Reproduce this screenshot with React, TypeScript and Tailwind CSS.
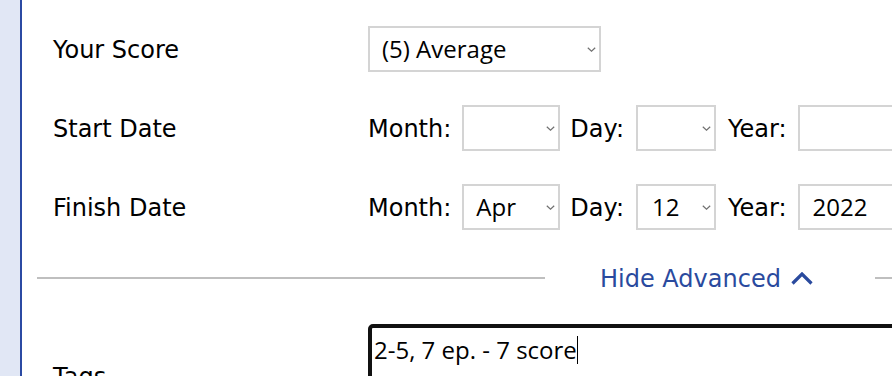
const labelFont = { fontFamily: '"DejaVu Sans", Verdana, sans-serif' };

function Chevron() {
  return (
    <svg width="9" height="5" viewBox="0 0 9 5" className="shrink-0">
      <path d="M0.8 0.8L4.5 4.2L8.2 0.8" fill="none" stroke="#707070" strokeWidth="1.2" />
    </svg>
  );
}

function FakeSelect({ value, width, pad = "pl-[12px]" }: { value?: string; width: string; pad?: string }) {
  return (
    <div
      className={`flex h-[46px] shrink-0 items-center justify-between border-2 border-[#d4d4d4] bg-white pr-[3px] ${pad} ${width}`}
    >
      <span className="text-[24px] leading-none text-black">{value ?? ""}</span>
      <Chevron />
    </div>
  );
}

function DateFields({ month, day, year }: { month?: string; day?: string; year?: string }) {
  return (
    <div className="flex items-center">
      <span className="pt-[2px] text-[24px] text-black" style={labelFont}>
        Month:
      </span>
      <div className="ml-[11px]">
        <FakeSelect value={month} width="w-[98px]" />
      </div>
      <span className="ml-[10px] pt-[2px] text-[24px] text-black" style={labelFont}>
        Day:
      </span>
      <div className="ml-[12px]">
        <FakeSelect value={day} width="w-[80px]" pad="pl-[14px]" />
      </div>
      <span className="ml-[12px] pt-[2px] text-[24px] text-black" style={labelFont}>
        Year:
      </span>
      <div className="ml-[11px] flex h-[46px] w-[120px] items-center border-2 border-[#d4d4d4] pl-[13px]">
        <span className="text-[24px] leading-none text-black">{year ?? ""}</span>
      </div>
    </div>
  );
}

function Row({ label, children }: { label: string; children: React.ReactNode }) {
  return (
    <div className="flex h-[46px] items-center">
      <div className="w-[315px] shrink-0 pt-[2px] text-[24px] text-black" style={labelFont}>
        {label}
      </div>
      {children}
    </div>
  );
}

export default function App() {
  return (
    <div
      className="flex h-[376px] w-[892px] overflow-hidden bg-white"
      style={{ fontFamily: '"Open Sans", "Noto Sans", sans-serif' }}
    >
      <div className="w-[20px] shrink-0 bg-[#e1e7f5]" />
      <main className="w-[1360px] shrink-0 border-l-2 border-[#2b4aa3] bg-white pt-[26px]">
        <div className="flex flex-col gap-[33px] pl-[31px]">
          <Row label="Your Score">
            <FakeSelect value="(5) Average" width="w-[233px]" />
          </Row>
          <Row label="Start Date">
            <DateFields />
          </Row>
          <Row label="Finish Date">
            <DateFields month="Apr" day="12" year="2022" />
          </Row>
        </div>

        <div className="mt-[28px] ml-[15px] flex h-[40px] items-center">
          <div className="h-[2px] w-[508px] shrink-0 bg-[#bfbfbf]" />
          <button
            type="button"
            className="ml-[55px] flex shrink-0 items-center text-[24px] text-[#2a4a9e]"
            style={labelFont}
          >
            <span className="pt-[2px]">Hide Advanced</span>
            <svg width="22" height="13" viewBox="0 0 22 13" className="ml-[10px]">
              <path d="M1.5 11.5L11 2L20.5 11.5" fill="none" stroke="#2a4a9e" strokeWidth="3.2" />
            </svg>
          </button>
          <div className="ml-[62px] h-[2px] w-[508px] shrink-0 bg-[#bfbfbf]" />
        </div>

        <div className="mt-[26px] flex items-center pl-[31px]">
          <div className="w-[315px] shrink-0 text-[24px] text-black" style={labelFont}>
            Tags
          </div>
          <div className="h-[106px] w-[600px] shrink-0 rounded-[5px] border-4 border-[#111] px-[2px] pt-[3px]">
            <span className="text-[24px] leading-[30px] text-black">2-5, 7 ep. - 7 score</span>
            <span className="inline-block h-[28px] w-px translate-y-[5px] bg-black align-baseline" />
          </div>
        </div>
      </main>
    </div>
  );
}
